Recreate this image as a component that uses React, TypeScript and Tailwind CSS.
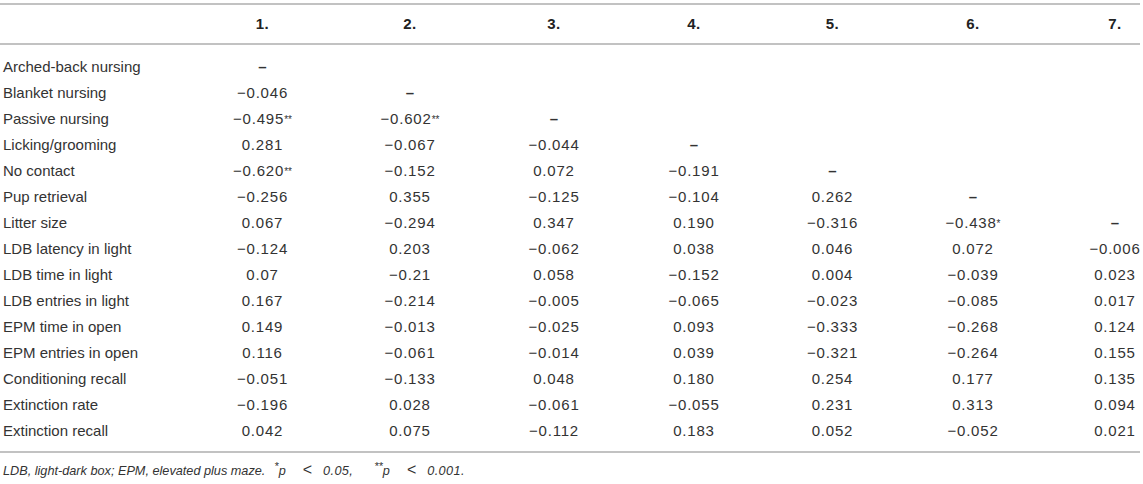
import React from 'react';

type Cell = string | null;

interface Row {
  label: string;
  values: Cell[];
}

// "-" marks the diagonal, null is an empty cell
const rows: Row[] = [
  { label: 'Arched-back nursing', values: ['-'] },
  { label: 'Blanket nursing', values: ['−0.046', '-'] },
  { label: 'Passive nursing', values: ['−0.495**', '−0.602**', '-'] },
  { label: 'Licking/grooming', values: ['0.281', '−0.067', '−0.044', '-'] },
  { label: 'No contact', values: ['−0.620**', '−0.152', '0.072', '−0.191', '-'] },
  { label: 'Pup retrieval', values: ['−0.256', '0.355', '−0.125', '−0.104', '0.262', '-'] },
  { label: 'Litter size', values: ['0.067', '−0.294', '0.347', '0.190', '−0.316', '−0.438*', '-'] },
  { label: 'LDB latency in light', values: ['−0.124', '0.203', '−0.062', '0.038', '0.046', '0.072', '−0.006'] },
  { label: 'LDB time in light', values: ['0.07', '−0.21', '0.058', '−0.152', '0.004', '−0.039', '0.023'] },
  { label: 'LDB entries in light', values: ['0.167', '−0.214', '−0.005', '−0.065', '−0.023', '−0.085', '0.017'] },
  { label: 'EPM time in open', values: ['0.149', '−0.013', '−0.025', '0.093', '−0.333', '−0.268', '0.124'] },
  { label: 'EPM entries in open', values: ['0.116', '−0.061', '−0.014', '0.039', '−0.321', '−0.264', '0.155'] },
  { label: 'Conditioning recall', values: ['−0.051', '−0.133', '0.048', '0.180', '0.254', '0.177', '0.135'] },
  { label: 'Extinction rate', values: ['−0.196', '0.028', '−0.061', '−0.055', '0.231', '0.313', '0.094'] },
  { label: 'Extinction recall', values: ['0.042', '0.075', '−0.112', '0.183', '0.052', '−0.052', '0.021'] },
];

const gridCols = 'grid grid-cols-[188px_149px_146px_142px_138px_139px_142px_96px]';

function Value({ value }: { value: Cell }) {
  if (value === null) return null;
  if (value === '-') return <span className="font-bold">–</span>;
  const m = value.match(/^([^*]+)(\**)$/);
  const num = m ? m[1] : value;
  const stars = m ? m[2] : '';
  return (
    <span className="tracking-[0.8px]">
      {num}
      {stars && <sup className="text-[10px] tracking-normal relative -top-[1px]">{stars}</sup>}
    </span>
  );
}

export default function App() {
  const cols = [1, 2, 3, 4, 5, 6, 7];

  return (
    <div
      className="w-[1140px] pt-[3px] text-[15px] text-[#333]"
      style={{ fontFamily: '"Liberation Sans", Arial, sans-serif' }}
    >
      <div className={`${gridCols} h-[42px] items-center border-y-2 border-[#c2c2c2]`}>
        <div />
        {cols.map(c => (
          <div
            key={c}
            className={`flex justify-center font-bold text-[#222] tracking-[0.5px] ${c === 7 ? 'pl-[46px]' : ''}`}
          >
            {c}.
          </div>
        ))}
      </div>

      <div className="pt-[9px] pb-[7px] border-b-2 border-[#c2c2c2]">
        {rows.map(row => (
          <div key={row.label} className={`${gridCols} h-[26px] items-center`}>
            <div className="pl-[3px] whitespace-nowrap">{row.label}</div>
            {cols.map((c, i) => (
              <div
                key={c}
                className={`flex justify-center whitespace-nowrap ${c === 7 ? 'pl-[46px]' : ''}`}
              >
                <Value value={row.values[i] ?? null} />
              </div>
            ))}
          </div>
        ))}
      </div>

      <p className="flex items-baseline pl-[3px] pt-[7px] text-[12.7px] italic text-[#333] leading-[20px] whitespace-nowrap">
        <span>LDB, light-dark box; EPM, elevated plus maze.</span>
        <sup className="ml-[9px] text-[11px]">*</sup>
        <span>p</span>
        <span className="ml-[17px] mr-[11px] not-italic text-[16px]">&lt;</span>
        <span className="tracking-[0.4px]">0.05,</span>
        <sup className="ml-[21px] text-[11px]">**</sup>
        <span>p</span>
        <span className="ml-[17px] mr-[11px] not-italic text-[16px]">&lt;</span>
        <span className="tracking-[0.4px]">0.001.</span>
      </p>
    </div>
  );
}
